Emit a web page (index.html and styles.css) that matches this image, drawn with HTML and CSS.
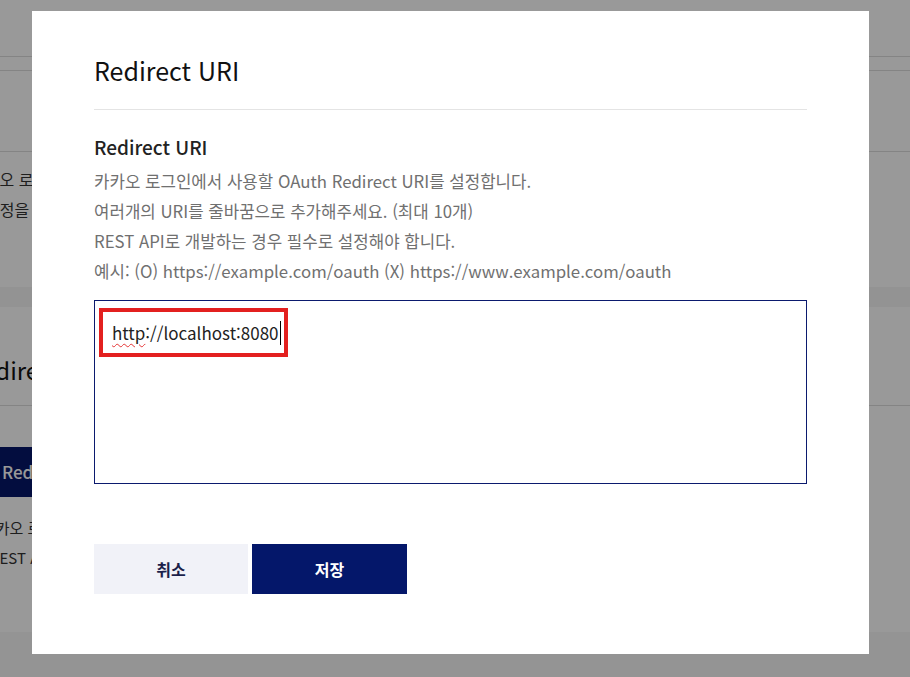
FILE: index.html
```html
<!DOCTYPE html>
<html lang="ko">
<head>
    <meta charset="UTF-8">
    <meta name="viewport" content="width=device-width, initial-scale=1.0">
    <title>Redirect URI</title>
    <link rel="stylesheet" href="styles.css">
</head>
<body>
    <!-- 뒤쪽 설정 페이지 -->
    <div class="page">
        <div class="pageHeader"></div>
        <div class="pageTabs"></div>
        <div class="pageSection"></div>
        <div class="pageText">
            <p>카카오 로그인을 사용하려면 앱 설정에서 활성화해야 합니다.</p>
            <p class="second">설정을 완료한 뒤 상태를 ON으로 변경하세요.</p>
        </div>
        <div class="pageBand"></div>
        <div class="pageTitle">Redirect URI</div>
        <div class="pagePanel">
            <div class="pageTab">Redirect URI</div>
            <p class="panelText">카카오 로그인에서 사용할 OAuth Redirect URI를 설정합니다.</p>
            <p class="panelText shift">REST API로 개발하는 경우 필수로 설정해야 합니다.</p>
        </div>
        <div class="pageFooter"></div>
    </div>

    <!-- 모달 -->
    <div class="overlay">
        <div class="modal">
            <h2 class="modalTitle">Redirect URI</h2>
            <h3 class="fieldTitle">Redirect URI</h3>
            <div class="fieldDesc">
                <p>카카오 로그인에서 사용할 OAuth Redirect URI를 설정합니다.</p>
                <p>여러개의 URI를 줄바꿈으로 추가해주세요. (최대 10개)</p>
                <p>REST API로 개발하는 경우 필수로 설정해야 합니다.</p>
                <p>예시: (O) https://example.com/oauth (X) https://www.example.com/oauth</p>
            </div>
            <div class="uriBox">
                <div class="uriInput"><span class="typo">http</span>://localhost:8080<span class="caret"></span></div>
                <!-- 강조 표시 -->
                <div class="highlight"></div>
            </div>
            <div class="buttons">
                <button class="btn cancel">취소</button>
                <button class="btn save">저장</button>
            </div>
        </div>
    </div>
</body>
</html>
```

FILE: styles.css
```css
* {
    box-sizing: border-box;
}

body {
    font-family: "Noto Sans CJK KR", "Noto Sans", sans-serif;
    background-color: #fff;
    color: #222;
    margin: 0;
    padding: 0;
    overflow: hidden;
}

p {
    margin: 0;
}

/* 뒤쪽 페이지 */
.page {
    margin-left: -30px;
    width: 980px;
}

.pageHeader {
    height: 57px;
    border-bottom: 1px solid #ddd;
}

.pageTabs {
    height: 14px;
    border-bottom: 1px solid #ddd;
}

.pageSection {
    height: 81px;
    border-bottom: 1px solid #ddd;
}

.pageText {
    height: 135px;
    padding-top: 12px;
    font-size: 16px;
    line-height: 30px;
    color: #333;
}

.pageText .second {
    margin-left: 15px;
}

.pageBand {
    height: 20px;
    background-color: #f5f5f5;
}

.pageTitle {
    font-size: 24px;
    line-height: 46px;
    padding: 40px 0 12px 0;
    margin-left: -3px;
    color: #111;
    border-bottom: 1px solid #ddd;
}

.pagePanel {
    padding-top: 41px;
    height: 226px;
}

.pageTab {
    background-color: #061769;
    color: #fff;
    font-size: 17px;
    font-weight: 500;
    line-height: 50px;
    width: 200px;
    padding-left: 32px;
    margin-bottom: 16px;
}

.panelText {
    font-size: 15px;
    line-height: 30px;
    color: #333;
    margin-left: 12px;
}

.panelText.shift {
    margin-left: 20px;
}

.pageFooter {
    height: 60px;
    background-color: #f7f7f7;
}

/* 모달 */
.overlay {
    position: fixed;
    top: 0;
    left: 0;
    right: 0;
    bottom: 0;
    background-color: rgba(0, 0, 0, 0.4);
    display: flex;
    align-items: flex-start;
    padding: 11px 41px 0 32px;
}

.modal {
    background-color: #fff;
    width: 837px;
    padding: 40px 62px 60px 62px;
}

.modalTitle {
    margin: 0;
    font-size: 25px;
    font-weight: 400;
    line-height: 38px;
    color: #111;
    padding-bottom: 20px;
    border-bottom: 1px solid #e4e4e4;
}

.fieldTitle {
    margin: 23px 0 0 0;
    font-size: 19px;
    font-weight: 500;
    line-height: 28px;
    color: #222;
}

.fieldDesc {
    margin-top: 5px;
    font-size: 16.8px;
    line-height: 30px;
    color: #707070;
}

.uriBox {
    position: relative;
    margin-top: 14px;
}

.uriInput {
    height: 184px;
    border: 1px solid #0b1a6e;
    padding: 20px 17px;
    font-size: 17px;
    line-height: 24px;
    color: #222;
}

.typo {
    text-decoration: underline wavy #e53535;
    text-decoration-thickness: 1px;
    text-underline-offset: 3px;
}

.caret {
    display: inline-block;
    width: 1px;
    height: 24px;
    background-color: #000;
    vertical-align: -5px;
    margin-left: 1px;
}

.highlight {
    position: absolute;
    left: 5px;
    top: 8px;
    width: 189px;
    height: 49px;
    border: 4px solid #e3201f;
}

.buttons {
    display: flex;
    gap: 4px;
    margin-top: 60px;
}

.btn {
    width: 154px;
    height: 50px;
    border: none;
    font-family: inherit;
    font-size: 16px;
    font-weight: 700;
    cursor: pointer;
}

.btn.save {
    width: 155px;
}

.cancel {
    background-color: #f1f2f8;
    color: #1b1f4a;
}

.save {
    background-color: #04176a;
    color: #fff;
}
```
